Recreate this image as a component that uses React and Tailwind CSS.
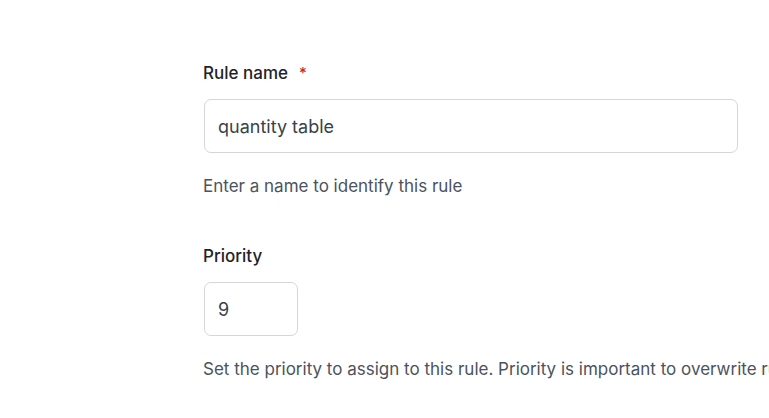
export default function App() {
  return (
    <div className="w-[769px] h-[418px] overflow-hidden bg-white" style={{ fontFamily: "Inter, 'Noto Sans', sans-serif" }}>
      <div className="pl-[203px] pt-[61px] flex flex-col">
        <label className="flex items-center gap-[11px] text-[17px] leading-[24px] font-medium text-[#1f2328]">
          Rule name <span className="text-[#c62828] text-[15px]">*</span>
        </label>
        <div className="mt-[14px] w-[534px] h-[54px] ml-px rounded-[7px] border border-[#d3d8d6] flex items-center px-[13px] text-[18px] text-[#3b4148]">
          quantity table
        </div>
        <p className="mt-[21px] text-[17px] leading-[24px] text-[#4b535c] whitespace-nowrap">Enter a name to identify this rule</p>
        <label className="mt-[46px] text-[17px] leading-[24px] font-medium text-[#1f2328]">Priority</label>
        <div className="mt-[14px] w-[94px] h-[54px] ml-px rounded-[7px] border border-[#d3d8d6] flex items-center px-[13px] text-[18px] text-[#3b4148]">
          9
        </div>
        <p className="mt-[21px] text-[17px] leading-[24px] text-[#4b535c] whitespace-nowrap">
          Set the priority to assign to this rule. Priority is important to overwrite rules with lower priority
        </p>
      </div>
    </div>
  );
}
